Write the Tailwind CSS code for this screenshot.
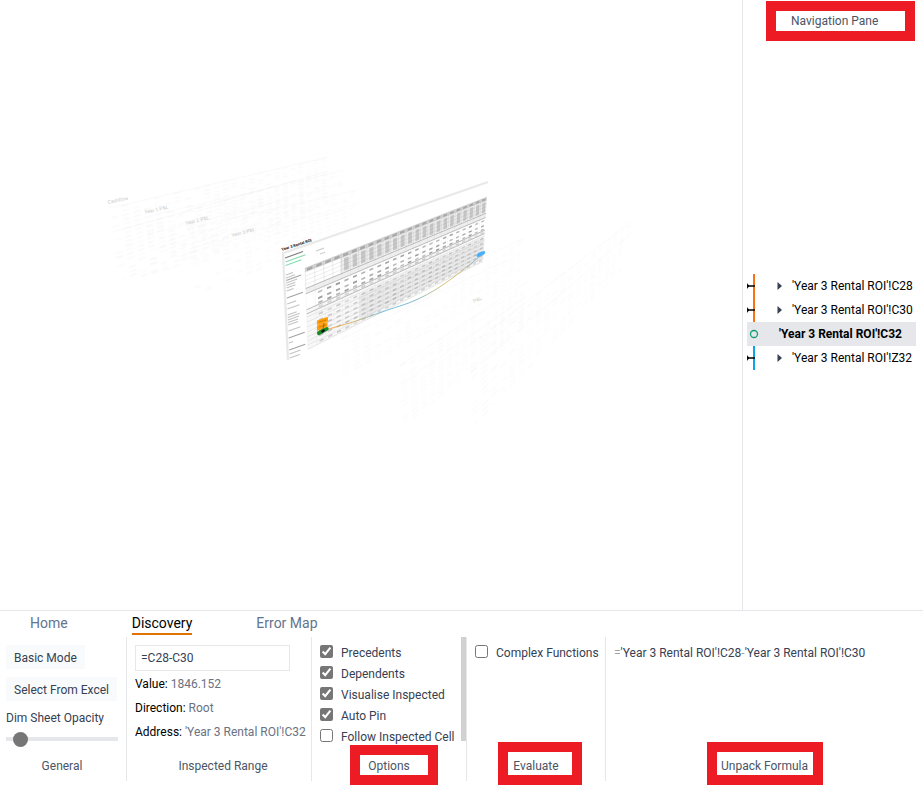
<!DOCTYPE html>
<html lang="en">
<head>
<meta charset="utf-8">
<title>Formula Discovery</title>
<script src="https://cdn.jsdelivr.net/npm/@tailwindcss/browser@4"></script>
</head>
<body class="flex h-screen flex-col overflow-hidden bg-white text-xs text-gray-700 font-['Roboto','Open_Sans',sans-serif]">
<main class="flex min-h-0 flex-1">
  <section class="min-w-0 flex-1 overflow-hidden" aria-label="Workbook view">
    <svg class="block h-[610px] w-[742px]" viewBox="0 0 742 610" role="img" aria-label="Workbook sheets in perspective">
      <defs>
        <linearGradient id="trace" x1="328" y1="0" x2="484" y2="0" gradientUnits="userSpaceOnUse">
          <stop offset="0" stop-color="#f0a020"/><stop offset=".17" stop-color="#d0aa50"/><stop offset=".35" stop-color="#50b4dc"/>
          <stop offset=".55" stop-color="#60a8b8"/><stop offset=".75" stop-color="#d8b050"/><stop offset=".85" stop-color="#c8b060"/><stop offset="1" stop-color="#40a8f0"/>
        </linearGradient>
      </defs>
      <g id="faint"></g>
      <g fill="#cccccc" font-size="5">
        <text transform="translate(108 204) rotate(-12)">Cashflow</text>
        <text transform="translate(145 214) rotate(-13)">Year 1 P&amp;L</text>
        <text transform="translate(186 225) rotate(-14)">Year 2 P&amp;L</text>
        <text transform="translate(232 237) rotate(-15)">Year 3 P&amp;L</text>
        <text transform="translate(474 303) rotate(-24)">P&amp;L</text>
      </g>
      <path d="M282 253 488 181 484 264 288 360Z" fill="#fff"/>
      <path d="M282 253.500 488 182" stroke="#e9e9e9" stroke-width="2.200" fill="none"/>
      <path d="M283 253 288 360" stroke="#e9e9e9" stroke-width="2.400" fill="none"/>
      <g id="sheet"></g>
      <text transform="translate(282 251) rotate(-18)" font-size="4" font-weight="700" fill="#111">Year 3 Rental ROI</text>
      <path d="M328 329C360 321 374 314 400 306S445 284 463 270 477 258 483 254" stroke="url(#trace)" stroke-width=".8" fill="none"/>
      <path d="m317 320.500 10-3.500q1 0 1 1v3.500l-10 3.500q-1 0-1-1ZM317 325.500l10.500-3.500v5l-10.500 4Z" fill="#ff9d0a"/>
      <path d="m319 322 7-2m-7 7 7-2" stroke="#c67800" stroke-width=".8"/>
      <path d="m317 332 3-2 7-3q2 0 1.500 3l-9 5q-2.500 1-2.500-3Z" fill="#188a25"/>
      <path d="m321 331 3-2 1 2-3 2Z" fill="#14121c"/><path d="m323 329 1-6" stroke="#555" stroke-width=".7"/>
      <path d="m476.500 255.500 1.500-2.500 6-2q1.500 0 1 2.500l-2 1.500-5 2q-1.500 0-1.500-1.500Z" fill="#49b0f8"/>
    </svg>
  </section>
  <aside class="flex w-[181px] shrink-0 flex-col border-l border-gray-200">
    <header class="ml-[23px] mr-2 mt-px flex h-10 items-center border-10 border-[#ed1c24] bg-white pl-[15px] text-gray-600"><h2>Navigation Pane</h2></header>
    <ul class="my-auto ml-1 mr-[7px] flex flex-col pb-2 text-black" role="tree">
      <li class="flex h-6 items-center" role="treeitem">
        <svg class="h-6 w-[28px] shrink-0" viewBox="0 0 28 24"><path d="M7 0v24" stroke="#f97316" stroke-width="2"/><path d="M0 9.500v5M0 10.500l2 1.500-2 1.500ZM2 12h6" stroke="#000" fill="#000" stroke-width="1.300"/></svg>
        <button class="flex items-center whitespace-nowrap"><svg class="mr-2 h-2 w-[9px] shrink-0" viewBox="0 0 9 8"><path d="M2.500 0 7 4 2.500 8Z" fill="#374151"/></svg>'Year 3 Rental ROI'!C28</button>
      </li>
      <li class="flex h-6 items-center" role="treeitem">
        <svg class="h-6 w-[28px] shrink-0" viewBox="0 0 28 24"><path d="M7 0v24" stroke="#f97316" stroke-width="2"/><path d="M0 9.500v5M0 10.500l2 1.500-2 1.500ZM2 12h6" stroke="#000" fill="#000" stroke-width="1.300"/></svg>
        <button class="flex items-center whitespace-nowrap"><svg class="mr-2 h-2 w-[9px] shrink-0" viewBox="0 0 9 8"><path d="M2.500 0 7 4 2.500 8Z" fill="#374151"/></svg>'Year 3 Rental ROI'!C30</button>
      </li>
      <li class="flex h-6 items-center bg-gray-200" role="treeitem" aria-selected="true">
        <svg class="h-6 w-8 shrink-0" viewBox="0 0 32 24"><circle cx="7" cy="12" r="3.500" fill="none" stroke="#10a070" stroke-width="1.300"/></svg>
        <button class="whitespace-nowrap font-bold">'Year 3 Rental ROI'!C32</button>
      </li>
      <li class="flex h-6 items-center" role="treeitem">
        <svg class="h-6 w-[28px] shrink-0" viewBox="0 0 28 24"><path d="M7 0v24" stroke="#0ea5e9" stroke-width="2"/><path d="M0 9.500v5M0 10.500l2 1.500-2 1.500ZM2 12h6" stroke="#000" fill="#000" stroke-width="1.300"/></svg>
        <button class="flex items-center whitespace-nowrap"><svg class="mr-2 h-2 w-[9px] shrink-0" viewBox="0 0 9 8"><path d="M2.500 0 7 4 2.500 8Z" fill="#374151"/></svg>'Year 3 Rental ROI'!Z32</button>
      </li>
    </ul>
  </aside>
</main>
<footer class="shrink-0 border-t border-gray-200 pb-1">
  <nav class="flex h-[26px] items-start gap-16 pl-[30px] text-sm leading-6 text-slate-500">
    <a href="#home" class="h-6 leading-6">Home</a>
    <a href="#discovery" class="h-6 border-b-2 border-amber-600 leading-6 text-black" aria-current="page">Discovery</a>
    <a href="#errors" class="h-6 leading-6">Error Map</a>
  </nav>
  <div class="flex h-36">
    <section class="flex w-[127px] shrink-0 flex-col border-r border-gray-200 pl-[6px] pr-2">
      <div class="flex flex-1 flex-col items-start pt-2">
        <button class="h-6 bg-gray-50 px-2 pt-px">Basic Mode</button>
        <button class="mt-2 h-6 whitespace-nowrap bg-gray-50 px-2 pt-px">Select From Excel</button>
        <label for="dim" class="mt-[9px] whitespace-nowrap">Dim Sheet Opacity</label>
        <input id="dim" type="range" min="0" max="100" value="7" class="mt-[11px] h-1 w-full appearance-none bg-gray-200 [&::-webkit-slider-thumb]:size-[15px] [&::-webkit-slider-thumb]:appearance-none [&::-webkit-slider-thumb]:rounded-full [&::-webkit-slider-thumb]:bg-[#767676]">
      </div>
      <h3 class="flex h-8 items-center justify-center pt-px text-gray-600">General</h3>
    </section>
    <section class="flex w-[185px] shrink-0 flex-col border-r border-gray-200 pl-2">
      <div class="flex-1 whitespace-nowrap pt-2 leading-6 text-gray-500">
        <input aria-label="Formula" value="=C28-C30" class="mb-px block h-[26px] w-[155px] border border-gray-200 px-[5px] text-gray-700">
        <p><span class="text-black">Value:</span> 1846.152</p>
        <p><span class="text-black">Direction:</span> Root</p>
        <p><span class="text-black">Address:</span> 'Year 3 Rental ROI'!C32</p>
      </div>
      <h3 class="flex h-8 items-center justify-center pt-px text-gray-600">Inspected Range</h3>
    </section>
    <section class="flex w-[155px] shrink-0 flex-col border-r border-gray-200">
      <div class="flex h-[104px] shrink-0 justify-between">
        <div class="flex flex-col whitespace-nowrap pl-2 pt-[6px]">
          <label class="flex h-[21px] shrink-0 gap-2"><input type="checkbox" checked class="mt-[2px] size-[13px] accent-[#767676]"><span class="leading-[21px]">Precedents</span></label>
          <label class="flex h-[21px] shrink-0 gap-2"><input type="checkbox" checked class="mt-[2px] size-[13px] accent-[#767676]"><span class="leading-[21px]">Dependents</span></label>
          <label class="flex h-[21px] shrink-0 gap-2"><input type="checkbox" checked class="mt-[2px] size-[13px] accent-[#767676]"><span class="leading-[21px]">Visualise Inspected</span></label>
          <label class="flex h-[21px] shrink-0 gap-2"><input type="checkbox" checked class="mt-[2px] size-[13px] accent-[#767676]"><span class="leading-[21px]">Auto Pin</span></label>
          <label class="flex h-[21px] shrink-0 gap-2"><input type="checkbox" class="mt-[2px] size-[13px]"><span class="leading-[21px]">Follow Inspected Cell</span></label>
        </div>
        <div class="w-[5px] shrink-0 bg-[#d1d1d1]"></div>
      </div>
      <h3 class="relative mt-2 flex h-8 items-center justify-center pt-px text-gray-600">Options<span class="absolute -top-1 left-[38px] h-10 w-[88px] border-10 border-[#ed1c24]"></span></h3>
    </section>
    <section class="flex w-[139px] shrink-0 flex-col border-r border-gray-200">
      <div class="flex-1 whitespace-nowrap pl-2 pt-[6px]">
        <label class="flex h-[21px] gap-2"><input type="checkbox" class="mt-[2px] size-[13px]"><span class="leading-[21px]">Complex Functions</span></label>
      </div>
      <h3 class="relative flex h-8 items-center justify-center pt-px text-gray-600">Evaluate<span class="absolute -top-[7px] left-[31px] h-[43px] w-[84px] border-10 border-[#ed1c24]"></span></h3>
    </section>
    <section class="flex min-w-0 flex-1 flex-col">
      <p class="flex-1 pl-2 pt-[6px] leading-[21px]"><span class="text-gray-400">=</span>'Year 3 Rental ROI'!C28<span class="text-gray-400">-</span>'Year 3 Rental ROI'!C30</p>
      <h3 class="relative flex h-8 items-center justify-center pt-px text-gray-600">Unpack Formula<span class="absolute inset-x-0 -top-[7px] mx-auto h-[43px] w-[116px] border-10 border-[#ed1c24]"></span></h3>
    </section>
  </div>
</footer>
<script>
  // Deterministic noise keeps the miniature tables stable between loads.
  let seed = 7;
  const rnd = () => (seed = (seed * 16807) % 2147483647) / 2147483647;
  // Maps sheet coordinates (0..1) onto a quad: top-left, top-right, bottom-right, bottom-left.
  const project = q => (u, v) => {
    const t = u * 1.25 / (1 + 0.25 * u);
    return [0, 1].map(i => ((q[0][i] * (1 - t) + q[1][i] * t) * (1 - v) + (q[3][i] * (1 - t) + q[2][i] * t) * v).toFixed(2));
  };
  const quad = (p, u0, v0, u1, v1, fill, o) =>
    `<path d="M${p(u0, v0)}L${p(u1, v0)}L${p(u1, v1)}L${p(u0, v1)}Z" fill="${fill}" opacity="${o}"/>`;
  const line = (p, u0, v0, u1, v1, c, w, o) =>
    `<path d="M${p(u0, v0)}L${p(u1, v1)}" stroke="${c}" stroke-width="${w}" opacity="${o}" fill="none"/>`;

  let s = '';
  const p = project([[305, 268], [487, 197], [483, 262], [308, 350]]);
  const n = 24;
  s += quad(p, 0, 0, 1, .05, '#999', .4);
  s += quad(p, .16, .05, 1, .24, '#aaa', .2);
  s += quad(p, 0, .25, 1, .31, '#aaa', .2);
  s += quad(p, 0, .5, 1, 1, '#bbb', .1);
  s += quad(p, .25, .62, 1, .95, '#aaa', .18);
  for (const v of [0, .05, .1, .15, .2, .6, .66, .72, .78, .84, .89, .94, .99]) s += line(p, 0, v, 1, v, '#999', .5, .35);
  for (const v of [.25, .315, .51, .56]) s += line(p, 0, v, 1, v, '#777', .8, .6);
  for (let i = 0; i < n; i++) {
    const u = i / n;
    s += line(p, u, 0, u, .25, '#999', .5, .35) + line(p, u, .25, u, 1, '#aaa', .3, .3);
    s += quad(p, u + .008, .01, u + .033, .045, '#666', .4);
    if (i > 3) s += quad(p, u + .012, .07, u + .034, .23, '#888', .38);
    for (const v of [.345, .42, .475, .525, .615, .69, .76, .82, .88, .95])
      if (i > 0) s += quad(p, u + .012, v, u + .032, v + .024, '#555', (v < .5 ? .5 : .25) * (.7 + rnd() * .5));
  }
  // Row captions and the summary block in the sheet's first columns.
  const label = (x, y, w, c, o) => `<path d="M${x} ${y}l${w} ${-w * .36}" stroke="${c}" stroke-width="1.100" opacity="${o}"/>`;
  s += label(285, 258, 18, '#444', .7);
  s += label(285.5, 262, 20, '#30c878', .6) + label(285.5, 265.5, 16, '#30c878', .6);
  s += label(316, 251, 8, '#888', .4) + label(320, 254, 5, '#888', .4);
  for (const [y, w] of [[275, 7], [278, 9], [280.500, 15], [283, 11], [285.500, 9], [288, 9], [291, 7], [298, 16], [304, 9], [309, 12], [315, 9], [317.500, 12], [320, 11], [322.500, 10], [325, 10], [331, 12], [338, 16], [343, 4], [350, 16], [354, 11], [358, 10]])
    s += label(285 + (y - 255) * .045, y, w, '#666', w > 14 ? .6 : .38);
  document.getElementById('sheet').innerHTML = s;

  let f = '';
  const sheets = [
    [[[110, 208], [328, 157], [328, 205], [120, 288]], 24, 18, .028],
    [[[145, 217], [345, 170], [345, 215], [152, 277]], 22, 13, .02],
    [[[186, 228], [358, 190], [355, 235], [195, 298]], 18, 12, .018],
    [[[340, 322], [525, 238], [522, 285], [343, 378]], 20, 14, .02],
    [[[400, 365], [527, 282], [525, 330], [403, 430]], 16, 16, .022],
    [[[470, 345], [633, 220], [630, 262], [473, 430]], 20, 16, .022]
  ];
  for (const [q, cols, rows, o] of sheets) {
    const m = project(q);
    f += line(m, 0, 0, 1, 0, '#777', 1, o * 1.5) + line(m, 0, .3, 1, .3, '#777', 1, o * 1.5);
    for (let i = 0; i < cols; i++)
      for (let j = 0; j < rows; j++)
        if (rnd() > .3) f += quad(m, i / cols, j / rows, (i + .65) / cols, (j + .55) / rows, '#777', o * (.5 + rnd() * .7));
  }
  document.getElementById('faint').innerHTML = f;
</script>
</body>
</html>
